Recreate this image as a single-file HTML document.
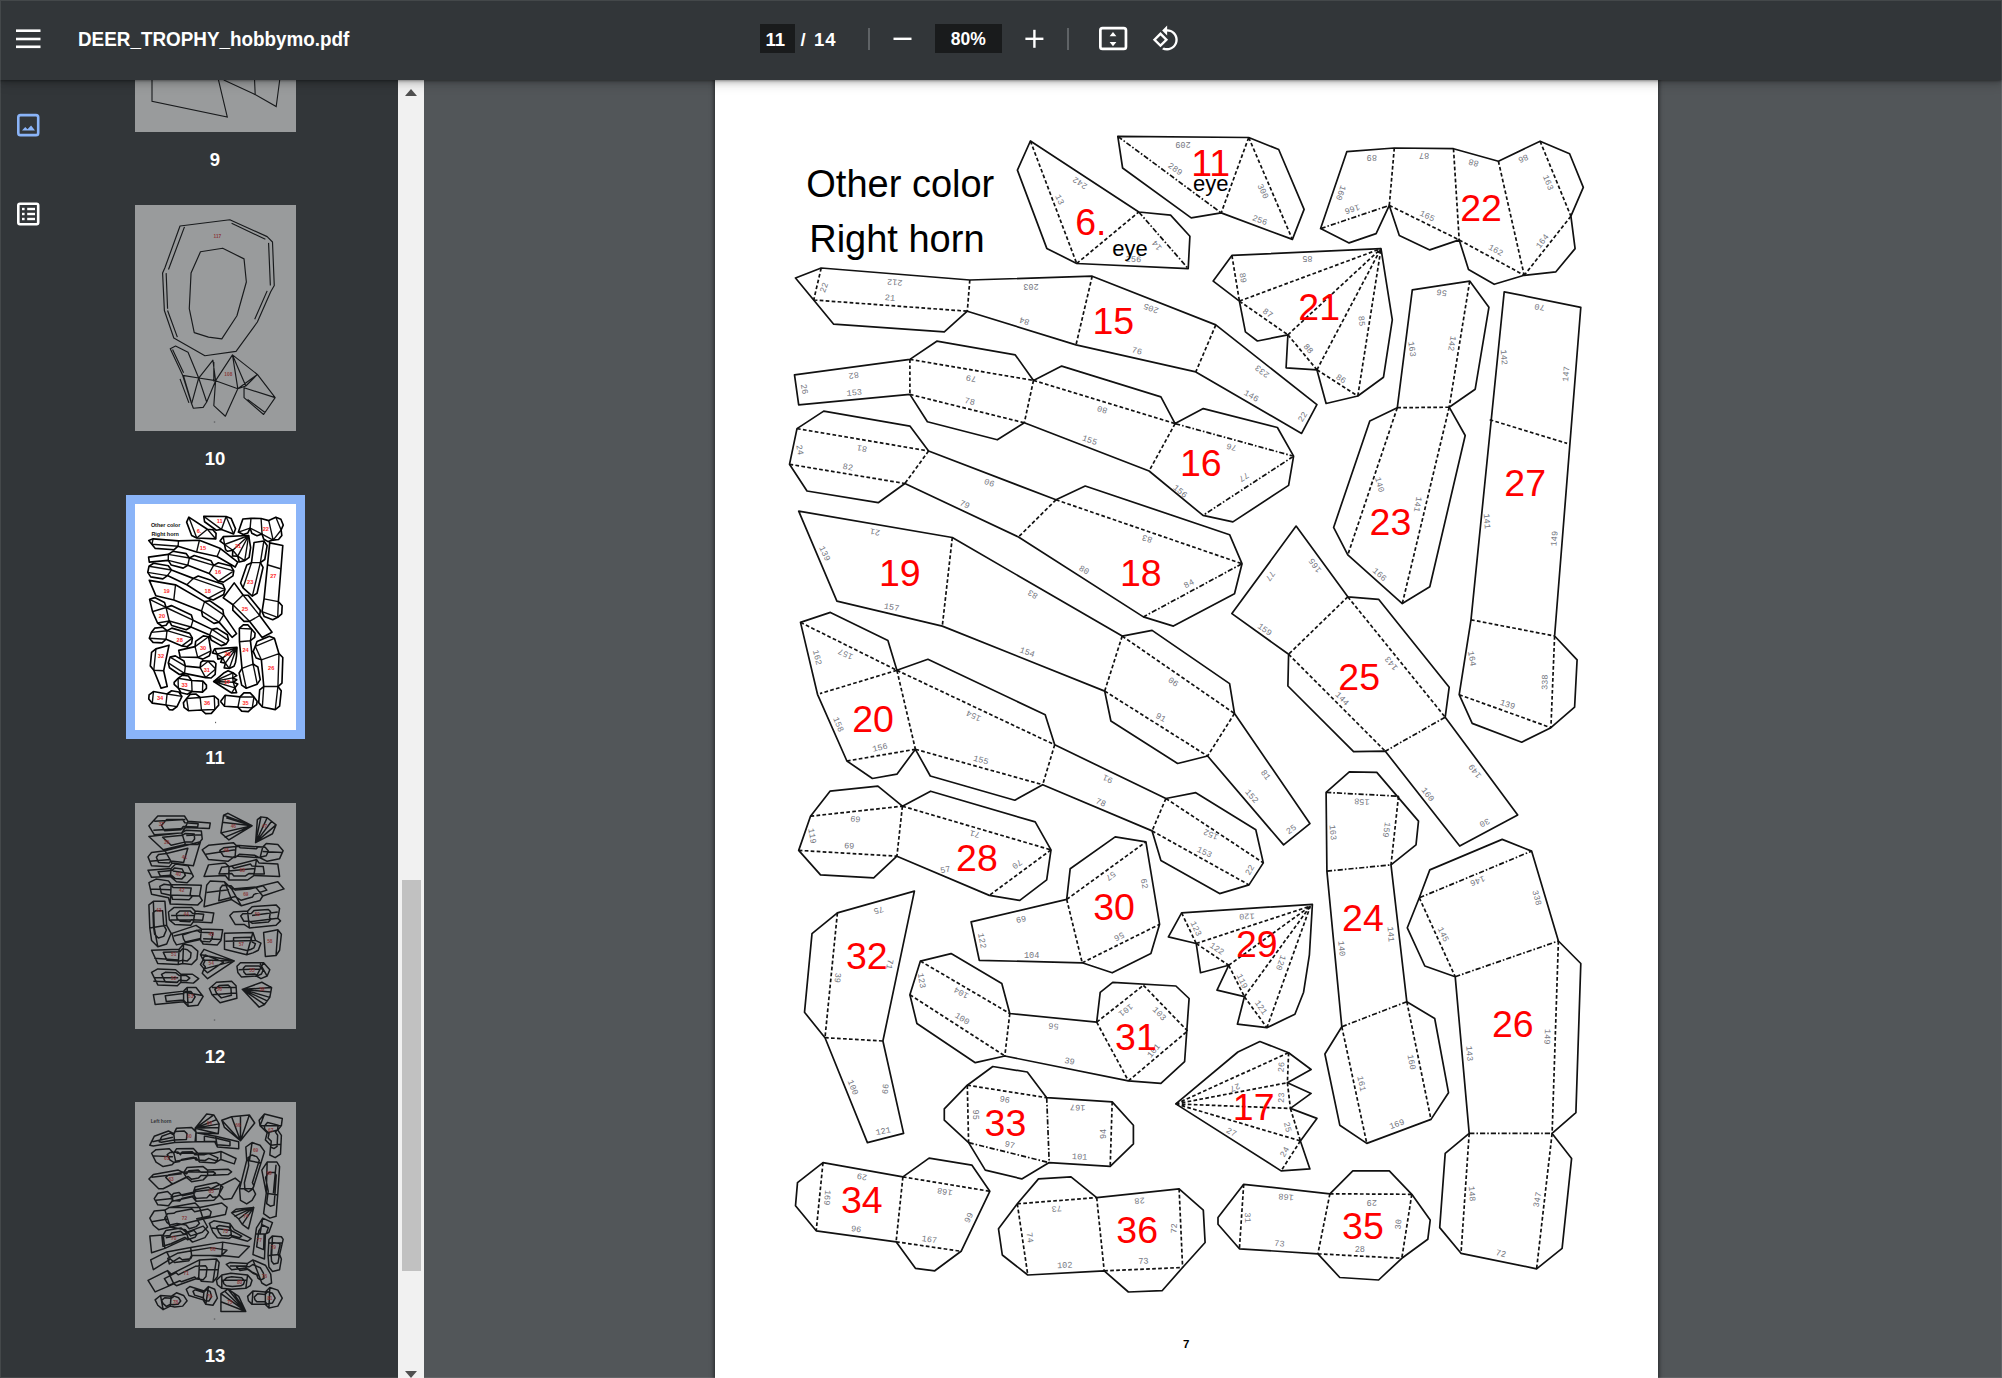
<!DOCTYPE html>
<html lang="en"><head><meta charset="utf-8"><title>DEER_TROPHY_hobbymo.pdf</title>
<style>
html,body{margin:0;padding:0;}
body{width:2002px;height:1378px;overflow:hidden;background:#525659;position:relative;font-family:"Liberation Sans",sans-serif;}
#main{position:absolute;left:424px;top:80px;width:1578px;height:1298px;background:#525659;}
#page{position:absolute;left:714.7px;top:64px;width:943.6px;height:1324px;background:#fff;box-shadow:0 0 4px 1px rgba(0,0,0,.55);}
#draw{position:absolute;left:0;top:0;}
#side{position:absolute;left:0;top:80px;width:398px;height:1298px;background:#323639;overflow:hidden;}
#sbar{position:absolute;left:398px;top:80px;width:26px;height:1298px;background:#f1f1f1;}
#sthumb{position:absolute;left:3.5px;top:800px;width:19px;height:391px;background:#c1c1c1;}
.arr{position:absolute;left:7px;width:0;height:0;border-left:6px solid transparent;border-right:6px solid transparent;}
#tbar{position:absolute;left:0;top:0;width:2002px;height:80px;background:#323639;box-shadow:0 -2px 8px rgba(0,0,0,.09),0 5px 10px rgba(0,0,0,.12),0 1px 2px rgba(0,0,0,.3),0 2px 6px rgba(0,0,0,.15);color:#fff;}
#title{position:absolute;left:78.4px;top:24.5px;font-size:20.5px;font-weight:bold;line-height:28px;white-space:nowrap;transform:scaleX(.92);transform-origin:0 0;}
.box{position:absolute;top:24px;height:29px;background:#191b1c;}
.tt{position:absolute;top:24.7px;line-height:29px;font-size:18.5px;font-weight:bold;white-space:nowrap;}
.dv{position:absolute;top:28px;width:1.5px;height:22px;background:#5f6366;}
#edge{position:absolute;left:0;top:0;width:2002px;height:1378px;box-shadow:inset 0 0 0 1px rgba(255,255,255,.09);pointer-events:none;}
.thumb{position:absolute;left:135px;width:161px;height:226px;background:#fff;opacity:.5;overflow:hidden;}
.tl{position:absolute;left:115px;width:200px;text-align:center;color:#fff;font-size:18.5px;font-weight:bold;line-height:22px;margin-top:1.3px;}
.red text{fill:#ff0000;font-size:37.5px;text-anchor:middle;font-family:"Liberation Sans",sans-serif;}
.blk text{fill:#000;font-family:"Liberation Sans",sans-serif;}
</style></head><body>
<div id="main"></div>
<div id="page"></div>
<svg id="draw" width="2002" height="1378" viewBox="0 0 2002 1378">
<g fill="none" stroke="#111" stroke-width="1.7" stroke-linejoin="round">
<path d="M1030.4,141 L1017.4,170.1 L1046.8,248.4 L1076.7,263.5 L1188.2,268.6 L1189.9,236.2 L1170.6,215.1 L1138.8,212Z M1117.8,136.4 L1248.7,137.5 L1278.7,149.5 L1304.1,209.4 L1292.4,239.4 L1221.2,212.9 L1191.2,217.9 L1122.6,168Z M1320.6,228.6 L1346.8,151.7 L1394.3,148 L1453.5,148.7 L1498.4,161.2 L1540.1,141.2 L1569.6,153.7 L1583.3,187.4 L1570.9,216.2 L1575.1,248.6 L1555.9,271.8 L1524.2,275.3 L1494.2,284.3 L1468.5,269.4 L1459.2,239.9 L1429.8,249.9 L1399.3,235.4 L1389.3,205.4 L1376.1,233.6 L1349.1,242.9Z M1213.2,281.1 L1231.9,255.4 L1381,248.6 L1392.3,319.8 L1383.5,377.2 L1357.8,396 L1326.1,403.5 L1316.9,369.8 L1286.1,367.8 L1287.9,334.8 L1257.4,341 L1245.4,331.8 L1239.4,301.1Z M1412.3,289.8 L1469.7,281.1 L1488.9,307.3 L1475.2,389.2 L1449.2,407.2 L1465.2,435.5 L1429.8,586.8 L1402.3,603.6 L1347.8,554.9 L1333.6,527.4 L1369.8,420.9 L1397.3,407.7Z M1504.2,291.8 L1580.8,307.3 L1554.6,636 L1577.1,659.8 L1574.6,707.2 L1550.9,727.7 L1521.7,742.2 L1472.2,723.4 L1459.2,694.7 L1471,619.8Z M795.5,278 L821.2,268 L969.8,280 L1092.2,276.2 L1215.8,324.9 L1316.9,404.7 L1301.6,433.4 L1195.8,371.9 L1076,344.9 L967.3,311.2 L944.3,331.9 L833.7,324.2Z M794.5,374.9 L909.9,359.4 L936.8,341.2 L1015.3,354.9 L1033.5,380.4 L1061.7,366.1 L1160.9,396.9 L1175.1,423.6 L1203.3,408.6 L1277.4,427.5 L1293.6,456.2 L1288.6,485.4 L1232.9,521.9 L1203,515.4 L1149.1,471 L1024.3,422.8 L997.3,439.8 L927.4,421.8 L909.9,394.4 L798.7,404.8Z M789.5,464.3 L797,428.6 L823.7,411.1 L909.9,426.1 L928.6,451 L1056,499.8 L1085.2,486 L1229.6,534.7 L1242,563.7 L1234.5,593.7 L1173.4,626.1 L1143.4,616.9 L1018.5,537 L904.9,483.5 L878.2,502.7 L807,491Z M798.7,511.2 L952.3,537.5 L1122.2,636.1 L1152.1,630.4 L1229.6,683.6 L1234.5,713.5 L1309.9,823.6 L1283.6,844.9 L1207.6,756 L1177.6,763.5 L1110.9,721 L1104.7,691.1 L942.3,626.1 L836.9,601.1Z M800.5,622.4 L830.4,612.4 L887.9,640.4 L896.9,670.3 L927.9,659.3 L1045.2,714.8 L1054.7,744.8 L1165.9,798.5 L1195.8,792.7 L1255.8,829.7 L1263.3,862.9 L1249,884.9 L1219.6,893.6 L1160.9,860.4 L1152.1,830.9 L1042.7,784.7 L1014.8,800.2 L930.3,776 L915.4,749.3 L896.9,774.2 L872.4,778.5 L846.9,761 L817.5,694.3Z M1296.1,526.1 L1347.8,596.8 L1378.6,599.3 L1449.2,687.2 L1445.2,717.2 L1517.7,814.9 L1459.7,846.1 L1385.3,751.2 L1353.6,751.7 L1287.9,686 L1288.6,654.3 L1231.9,613.6Z M1326.1,792.4 L1349.3,771.9 L1376.8,772.4 L1418.5,821.1 L1416,844.9 L1391,864.9 L1406.8,1001.7 L1434.7,1018.5 L1448.5,1092.7 L1431,1119.4 L1366.8,1143.4 L1339.8,1125.2 L1324.9,1054 L1341.8,1026.7 L1326.9,871.1Z M1429.8,869.9 L1502.2,839.4 L1531.6,851.1 L1558.4,941 L1580.8,963.5 L1575.9,1112.7 L1552.1,1133.4 L1571.6,1158.4 L1562.1,1248.3 L1536.6,1268.8 L1461,1253.3 L1439.7,1227.6 L1445.2,1153.4 L1469.2,1133.4 L1455.2,976.7 L1424.8,966 L1407.3,927.8 L1419.3,897.8Z M1181.6,912.9 L1312.4,904.3 L1309.4,954.8 L1303.6,992.2 L1294.9,1014.2 L1266.9,1027.7 L1237.4,1024.2 L1244.4,996.7 L1217,990.2 L1228.7,965.3 L1200.5,972.7 L1196.2,943.5 L1168.4,936.8Z M798.7,850.4 L810.5,816.2 L830,791.2 L877.9,786.2 L902.4,806.2 L930.6,791.2 L1035.2,821.9 L1051,849.9 L1046.7,879.9 L1019.8,900.4 L989.3,895.4 L896.9,856.2 L873.7,877.9 L820.5,874.9Z M971.1,921.8 L1066.7,899.4 L1070.2,868.7 L1115.2,836.9 L1145.9,841.9 L1159.6,924.3 L1150.9,953.6 L1112.2,972.8 L1082.2,962.8 L979.3,960.3Z M837.4,912.9 L914.4,891.1 L882.9,1041 L903.6,1133.4 L867.4,1142.6 L825,1037.7 L804.5,1012.3 L812,933.6Z M909.9,994.8 L920.4,961.1 L951.1,953.6 L1001.8,983.5 L1009.8,1013.5 L1096.7,1022.2 L1100.2,992.3 L1112.7,982.3 L1175.9,986 L1189.1,998.5 L1184.6,1061.7 L1160.9,1083.4 L1128.4,1080.9 L1004.8,1056 L975.3,1062.7 L916.9,1023.5Z M944.3,1108.9 L967.3,1085.2 L992.8,1066.5 L1027.3,1072 L1046.7,1097.7 L1112.2,1101.9 L1133.4,1125.2 L1133.4,1143.9 L1110.2,1166.4 L1049.2,1162.6 L1021.8,1178.9 L985.3,1170.1 L968.6,1142.6 L944.3,1120.2Z M795.5,1205.8 L797.5,1182.6 L823,1162.6 L902.9,1176.9 L929.1,1158.1 L971.8,1165.1 L989.8,1191.3 L961.1,1251.3 L934.8,1270.8 L915.4,1268.3 L896.1,1241.8 L816.2,1230.8Z M998.5,1228.8 L1017.3,1203.8 L1038.5,1178.9 L1071,1176.9 L1096.7,1197.6 L1179.1,1188.8 L1203.3,1210.1 L1205.1,1242.5 L1182.6,1267.5 L1162.1,1290.7 L1128.4,1292 L1104.2,1270.8 L1027.8,1275 L1002.3,1255Z M1175.8,1103.9 L1237.9,1052 L1259.9,1041.5 L1288.6,1052.7 L1311.1,1069.5 L1287.4,1082.7 L1311.1,1093.4 L1290.4,1108.4 L1316.9,1118.4 L1300.4,1140.9 L1309.9,1168.9 L1281.1,1170.9Z M1218,1217.6 L1243.7,1184.3 L1329.9,1193.8 L1352.8,1170.9 L1389.3,1170.9 L1411.8,1194.3 L1430.2,1220.1 L1427.8,1239.3 L1401.8,1258.3 L1378.6,1280 L1339.8,1277.5 L1317.9,1253.8 L1239.4,1248.8 L1218,1224.3Z"/>
<path stroke-dasharray="3.7 2.3" d="M1030.4,141 L1076.7,263.5 M1076.7,263.5 L1138.8,212 M1248.7,137.5 L1221.2,212.9 M1248.7,137.5 L1292.4,239.4 M1394.3,148 L1389.3,205.4 M1389.3,205.4 L1459.2,239.9 M1453.5,148.7 L1459.2,239.9 M1459.2,239.9 L1524.2,275.3 M1498.4,161.2 L1524.2,275.3 M1540.1,141.2 L1570.9,216.2 M1570.9,216.2 L1524.2,275.3 M1231.9,255.4 L1239.4,301.1 M1239.4,301.1 L1381,248.6 M1239.4,301.1 L1287.9,334.8 M1287.9,334.8 L1381,248.6 M1287.9,334.8 L1316.9,369.8 M1316.9,369.8 L1381,248.6 M1316.9,369.8 L1357.8,396 M1357.8,396 L1381,248.6 M1469.7,281.1 L1449.2,407.2 M1397.3,407.7 L1449.2,407.2 M1397.3,407.7 L1347.8,554.9 M1449.2,407.2 L1402.3,603.6 M1489.7,419.7 L1567.1,443.4 M1471,619.8 L1554.6,636 M1554.6,636 L1550.9,727.7 M1459.2,694.7 L1550.9,727.7 M821.2,268 L813.7,300 M813.7,300 L967.3,311.2 M969.8,280 L967.3,311.2 M1092.2,276.2 L1076,344.9 M1215.8,324.9 L1195.8,371.9 M909.9,359.4 L909.9,394.4 M909.9,359.4 L1033.5,380.4 M909.9,394.4 L1024.3,422.8 M1033.5,380.4 L1024.3,422.8 M1033.5,380.4 L1175.1,423.6 M1175.1,423.6 L1149.1,471 M797,428.6 L928.6,451 M789.5,464.3 L904.9,483.5 M928.6,451 L904.9,483.5 M1056,499.8 L1018.5,537 M1056,499.8 L1242,563.7 M952.3,537.5 L942.3,626.1 M1122.2,636.1 L1104.7,691.1 M1122.2,636.1 L1234.5,713.5 M1104.7,691.1 L1207.6,756 M1234.5,713.5 L1207.6,756 M800.5,622.4 L896.9,670.3 M896.9,670.3 L820,693.6 M896.9,670.3 L915.4,749.3 M846.9,761 L915.4,749.3 M896.9,670.3 L1054.7,744.8 M915.4,749.3 L1042.7,784.7 M1054.7,744.8 L1042.7,784.7 M1165.9,798.5 L1152.1,830.9 M1165.9,798.5 L1263.3,862.9 M1152.1,830.9 L1249,884.9 M1347.8,596.8 L1288.6,654.3 M1347.8,596.8 L1445.2,717.2 M1288.6,654.3 L1385.3,751.2 M1398.5,796.2 L1391,864.9 M1341.8,1026.7 L1366.8,1143.4 M1406.8,1001.7 L1431,1119.4 M1419.3,897.8 L1455.2,976.7 M1558.4,941 L1552.1,1133.4 M1469.2,1133.4 L1461,1253.3 M1552.1,1133.4 L1536.6,1268.8 M1181.6,912.9 L1196.2,943.5 M1196.2,943.5 L1310.4,906.1 M1196.2,943.5 L1228.7,965.3 M1228.7,965.3 L1310.4,906.1 M1228.7,965.3 L1244.4,996.7 M1244.4,996.7 L1310.4,906.1 M1244.4,996.7 L1266.9,1027.7 M1266.9,1027.7 L1310.4,906.1 M810.5,816.2 L902.4,806.2 M902.4,806.2 L896.9,856.2 M798.7,850.4 L896.9,856.2 M902.4,806.2 L1051,849.9 M1051,849.9 L989.3,895.4 M1066.7,899.4 L1145.9,841.9 M1066.7,899.4 L1082.2,962.8 M1082.2,962.8 L1159.6,924.3 M837.4,912.9 L825,1037.7 M825,1037.7 L882.9,1041 M920.4,961.1 L1009.8,1013.5 M909.9,994.8 L1004.8,1056 M1009.8,1013.5 L1004.8,1056 M1096.7,1022.2 L1143.4,985.3 M1143.4,985.3 L1187.6,1031 M1096.7,1022.2 L1128.4,1080.9 M1128.4,1080.9 L1187.6,1031 M967.3,1085.2 L1046.7,1097.7 M967.3,1085.2 L968.6,1142.6 M1112.2,1101.9 L1110.2,1166.4 M823,1162.6 L816.2,1230.8 M902.9,1176.9 L896.1,1241.8 M902.9,1176.9 L989.8,1191.3 M896.1,1241.8 L961.1,1251.3 M1017.3,1203.8 L1096.7,1197.6 M1017.3,1203.8 L1027.8,1275 M1096.7,1197.6 L1104.2,1270.8 M1179.1,1188.8 L1182.6,1267.5 M1104.2,1270.8 L1182.6,1267.5 M1175.8,1103.9 L1288.6,1052.7 M1175.8,1103.9 L1287.4,1082.7 M1175.8,1103.9 L1290.4,1108.4 M1175.8,1103.9 L1300.4,1140.9 M1288.6,1052.7 L1287.4,1082.7 M1287.4,1082.7 L1290.4,1108.4 M1290.4,1108.4 L1300.4,1140.9 M1300.4,1140.9 L1281.1,1170.9 M1243.7,1184.3 L1239.4,1248.8 M1329.9,1193.8 L1317.9,1253.8 M1329.9,1193.8 L1411.8,1194.3 M1411.8,1194.3 L1401.8,1258.3 M1317.9,1253.8 L1401.8,1258.3"/>
<path stroke-dasharray="5.2 2 1.6 2" d="M1138.8,212 L1188.2,268.6 M1117.8,136.4 L1221.2,212.9 M1320.6,228.6 L1389.3,205.4 M1175.1,423.6 L1293.6,456.2 M1293.6,456.2 L1203,515.4 M1242,563.7 L1143.4,616.9 M1445.2,717.2 L1385.3,751.2 M1326.1,792.4 L1398.5,796.2 M1326.9,871.1 L1391,864.9 M1341.8,1026.7 L1406.8,1001.7 M1419.3,897.8 L1531.6,851.1 M1455.2,976.7 L1558.4,941 M1469.2,1133.4 L1552.1,1133.4 M1046.7,1097.7 L1049.2,1162.6 M968.6,1142.6 L1049.2,1162.6"/>
</g>
<g font-family="Liberation Mono,monospace" font-size="8.6" fill="#75777f" text-anchor="middle">
<text transform="translate(1079.9 183.1) rotate(213)" y="2.9">242</text>
<text transform="translate(1059.9 199.5) rotate(65)" y="2.9">13</text>
<text transform="translate(1156.7 245.6) rotate(230)" y="2.9">14</text>
<text transform="translate(1133.5 258.9) rotate(3)" y="2.9">256</text>
<text transform="translate(1183 145.3) rotate(180)" y="2.9">209</text>
<text transform="translate(1175.2 168.8) rotate(35)" y="2.9">289</text>
<text transform="translate(1263.2 191.2) rotate(65)" y="2.9">300</text>
<text transform="translate(1259.9 219.9) rotate(20)" y="2.9">256</text>
<text transform="translate(1371.8 157.5) rotate(180)" y="2.9">89</text>
<text transform="translate(1424 155.7) rotate(180)" y="2.9">87</text>
<text transform="translate(1473.5 163) rotate(195)" y="2.9">88</text>
<text transform="translate(1523.4 158.7) rotate(155)" y="2.9">86</text>
<text transform="translate(1548.4 182.4) rotate(68)" y="2.9">163</text>
<text transform="translate(1341.1 192.9) rotate(110)" y="2.9">160</text>
<text transform="translate(1352.3 209.4) rotate(162)" y="2.9">166</text>
<text transform="translate(1427.3 215.7) rotate(25)" y="2.9">165</text>
<text transform="translate(1495.9 249.9) rotate(28)" y="2.9">162</text>
<text transform="translate(1542.1 241.1) rotate(-52)" y="2.9">164</text>
<text transform="translate(1307.4 259.4) rotate(180)" y="2.9">85</text>
<text transform="translate(1243.2 277.8) rotate(80)" y="2.9">89</text>
<text transform="translate(1267.9 312.8) rotate(35)" y="2.9">87</text>
<text transform="translate(1361.8 321) rotate(85)" y="2.9">85</text>
<text transform="translate(1308.6 348.5) rotate(50)" y="2.9">88</text>
<text transform="translate(1341.1 378.5) rotate(33)" y="2.9">86</text>
<text transform="translate(1441.7 292.8) rotate(188)" y="2.9">56</text>
<text transform="translate(1452.2 343.5) rotate(100)" y="2.9">142</text>
<text transform="translate(1412.3 349) rotate(82)" y="2.9">163</text>
<text transform="translate(1539.6 307.3) rotate(190)" y="2.9">70</text>
<text transform="translate(1504.2 357.3) rotate(85)" y="2.9">142</text>
<text transform="translate(1565.9 374) rotate(-85)" y="2.9">147</text>
<text transform="translate(1302.4 416.7) rotate(-60)" y="2.9">22</text>
<text transform="translate(823.7 287.5) rotate(-70)" y="2.9">22</text>
<text transform="translate(894.9 282.5) rotate(185)" y="2.9">212</text>
<text transform="translate(889.9 297.5) rotate(5)" y="2.9">21</text>
<text transform="translate(1031 287) rotate(180)" y="2.9">203</text>
<text transform="translate(1024.3 321.2) rotate(197)" y="2.9">84</text>
<text transform="translate(1150.9 308.7) rotate(200)" y="2.9">205</text>
<text transform="translate(1137.1 350.6) rotate(15)" y="2.9">76</text>
<text transform="translate(1262 371.6) rotate(218)" y="2.9">233</text>
<text transform="translate(1251.5 395.6) rotate(30)" y="2.9">146</text>
<text transform="translate(853.7 375.6) rotate(172)" y="2.9">82</text>
<text transform="translate(804.5 389.1) rotate(80)" y="2.9">26</text>
<text transform="translate(854.2 392.4) rotate(-5)" y="2.9">153</text>
<text transform="translate(971.1 378.6) rotate(190)" y="2.9">79</text>
<text transform="translate(969.8 401.1) rotate(13)" y="2.9">78</text>
<text transform="translate(1102.2 409.8) rotate(197)" y="2.9">80</text>
<text transform="translate(1089.7 439.8) rotate(20)" y="2.9">155</text>
<text transform="translate(1231.5 447.3) rotate(195)" y="2.9">76</text>
<text transform="translate(1244 477.3) rotate(148)" y="2.9">77</text>
<text transform="translate(1180.3 491) rotate(40)" y="2.9">156</text>
<text transform="translate(800 449.8) rotate(80)" y="2.9">24</text>
<text transform="translate(861.9 448.6) rotate(190)" y="2.9">81</text>
<text transform="translate(847.9 466.8) rotate(10)" y="2.9">82</text>
<text transform="translate(989.3 482.8) rotate(200)" y="2.9">90</text>
<text transform="translate(964.8 504.2) rotate(25)" y="2.9">79</text>
<text transform="translate(874.9 532.2) rotate(190)" y="2.9">21</text>
<text transform="translate(825 553.4) rotate(65)" y="2.9">139</text>
<text transform="translate(1147.1 539) rotate(198)" y="2.9">83</text>
<text transform="translate(1084.2 569.7) rotate(30)" y="2.9">80</text>
<text transform="translate(1188.8 583.4) rotate(-28)" y="2.9">84</text>
<text transform="translate(1032.7 594.4) rotate(210)" y="2.9">83</text>
<text transform="translate(891.6 606.9) rotate(10)" y="2.9">157</text>
<text transform="translate(1027.3 651.8) rotate(20)" y="2.9">154</text>
<text transform="translate(817.5 657.3) rotate(75)" y="2.9">162</text>
<text transform="translate(845.4 654.3) rotate(205)" y="2.9">157</text>
<text transform="translate(838.7 724.3) rotate(68)" y="2.9">158</text>
<text transform="translate(879.9 747.3) rotate(-12)" y="2.9">156</text>
<text transform="translate(973.6 716) rotate(205)" y="2.9">154</text>
<text transform="translate(981 759.7) rotate(15)" y="2.9">155</text>
<text transform="translate(1173.4 681.8) rotate(215)" y="2.9">90</text>
<text transform="translate(1160.9 717.3) rotate(30)" y="2.9">91</text>
<text transform="translate(1107.7 779.2) rotate(205)" y="2.9">91</text>
<text transform="translate(1100.9 802.2) rotate(25)" y="2.9">78</text>
<text transform="translate(1265.8 774.7) rotate(55)" y="2.9">81</text>
<text transform="translate(1252 796) rotate(50)" y="2.9">152</text>
<text transform="translate(1210.8 834.7) rotate(205)" y="2.9">152</text>
<text transform="translate(855.4 819.2) rotate(185)" y="2.9">69</text>
<text transform="translate(812.5 835.9) rotate(80)" y="2.9">119</text>
<text transform="translate(974.8 834.2) rotate(195)" y="2.9">71</text>
<text transform="translate(1379.8 484.4) rotate(75)" y="2.9">140</text>
<text transform="translate(1418 504.4) rotate(100)" y="2.9">141</text>
<text transform="translate(1379.8 574.3) rotate(42)" y="2.9">166</text>
<text transform="translate(1487.2 521.1) rotate(85)" y="2.9">141</text>
<text transform="translate(1554.1 538.6) rotate(-85)" y="2.9">149</text>
<text transform="translate(1472.2 658.5) rotate(80)" y="2.9">164</text>
<text transform="translate(1544.6 682.2) rotate(-88)" y="2.9">338</text>
<text transform="translate(1507.7 704.2) rotate(18)" y="2.9">139</text>
<text transform="translate(1314.9 565.6) rotate(234)" y="2.9">165</text>
<text transform="translate(1270.4 576.1) rotate(125)" y="2.9">77</text>
<text transform="translate(1264.9 629.3) rotate(35)" y="2.9">159</text>
<text transform="translate(1391 663.5) rotate(231)" y="2.9">143</text>
<text transform="translate(1342.3 698.5) rotate(45)" y="2.9">144</text>
<text transform="translate(1291.1 829.1) rotate(-35)" y="2.9">25</text>
<text transform="translate(1361.8 801.9) rotate(183)" y="2.9">158</text>
<text transform="translate(1333.1 832.4) rotate(85)" y="2.9">163</text>
<text transform="translate(1386.8 829.9) rotate(98)" y="2.9">159</text>
<text transform="translate(1428 794.2) rotate(52)" y="2.9">160</text>
<text transform="translate(1474.7 771.2) rotate(233)" y="2.9">149</text>
<text transform="translate(1484.7 822.9) rotate(152)" y="2.9">30</text>
<text transform="translate(1477.7 881.1) rotate(158)" y="2.9">146</text>
<text transform="translate(1537.1 897.8) rotate(75)" y="2.9">338</text>
<text transform="translate(1443.5 934.3) rotate(65)" y="2.9">145</text>
<text transform="translate(1391 934.3) rotate(85)" y="2.9">141</text>
<text transform="translate(1341.8 948.5) rotate(85)" y="2.9">140</text>
<text transform="translate(1547.6 1036.7) rotate(92)" y="2.9">149</text>
<text transform="translate(1469.7 1053.4) rotate(85)" y="2.9">143</text>
<text transform="translate(1196.2 928.5) rotate(65)" y="2.9">123</text>
<text transform="translate(1246.9 916.6) rotate(178)" y="2.9">120</text>
<text transform="translate(1217 948.5) rotate(35)" y="2.9">122</text>
<text transform="translate(1281.1 962.8) rotate(110)" y="2.9">120</text>
<text transform="translate(1242.4 981) rotate(65)" y="2.9">119</text>
<text transform="translate(1261.2 1007.2) rotate(55)" y="2.9">121</text>
<text transform="translate(849.2 845.7) rotate(3)" y="2.9">69</text>
<text transform="translate(945.3 869.4) rotate(-10)" y="2.9">57</text>
<text transform="translate(1017.3 864.4) rotate(144)" y="2.9">70</text>
<text transform="translate(1204.6 851.9) rotate(25)" y="2.9">153</text>
<text transform="translate(1249.5 869.9) rotate(-60)" y="2.9">22</text>
<text transform="translate(878.7 910.4) rotate(164)" y="2.9">75</text>
<text transform="translate(1021 919.4) rotate(168)" y="2.9">69</text>
<text transform="translate(1110.9 876.1) rotate(144)" y="2.9">57</text>
<text transform="translate(1144.6 883.6) rotate(80)" y="2.9">62</text>
<text transform="translate(1119.2 936.8) rotate(152)" y="2.9">56</text>
<text transform="translate(982.3 940.6) rotate(80)" y="2.9">122</text>
<text transform="translate(1031.7 954.8) rotate(0)" y="2.9">104</text>
<text transform="translate(889.9 964.3) rotate(100)" y="2.9">71</text>
<text transform="translate(837.9 977.8) rotate(95)" y="2.9">39</text>
<text transform="translate(921.9 980.5) rotate(80)" y="2.9">123</text>
<text transform="translate(961.1 993) rotate(210)" y="2.9">104</text>
<text transform="translate(962.3 1018.5) rotate(33)" y="2.9">100</text>
<text transform="translate(1053.5 1026.5) rotate(185)" y="2.9">56</text>
<text transform="translate(1125.9 1010.3) rotate(142)" y="2.9">101</text>
<text transform="translate(1159.6 1013.5) rotate(45)" y="2.9">103</text>
<text transform="translate(1153.4 1050.5) rotate(-50)" y="2.9">101</text>
<text transform="translate(1069.7 1061) rotate(12)" y="2.9">39</text>
<text transform="translate(853.2 1087.2) rotate(68)" y="2.9">100</text>
<text transform="translate(885.4 1088.9) rotate(95)" y="2.9">99</text>
<text transform="translate(883.1 1130.9) rotate(-12)" y="2.9">121</text>
<text transform="translate(1004.8 1099.4) rotate(10)" y="2.9">96</text>
<text transform="translate(1077.7 1107.7) rotate(183)" y="2.9">167</text>
<text transform="translate(976.1 1114.7) rotate(90)" y="2.9">95</text>
<text transform="translate(1009.8 1144.6) rotate(12)" y="2.9">97</text>
<text transform="translate(1102.9 1133.9) rotate(-90)" y="2.9">94</text>
<text transform="translate(1079.7 1156.4) rotate(3)" y="2.9">101</text>
<text transform="translate(861.9 1176.9) rotate(190)" y="2.9">29</text>
<text transform="translate(944.8 1191.8) rotate(190)" y="2.9">168</text>
<text transform="translate(827.5 1197.6) rotate(95)" y="2.9">169</text>
<text transform="translate(856.2 1228.8) rotate(8)" y="2.9">96</text>
<text transform="translate(968.6 1217.6) rotate(-65)" y="2.9">99</text>
<text transform="translate(929.4 1239.3) rotate(8)" y="2.9">167</text>
<text transform="translate(1139.6 1200.8) rotate(175)" y="2.9">28</text>
<text transform="translate(1056.7 1208.8) rotate(175)" y="2.9">73</text>
<text transform="translate(1030.2 1237.5) rotate(82)" y="2.9">74</text>
<text transform="translate(1173.9 1228.3) rotate(-88)" y="2.9">72</text>
<text transform="translate(1064.7 1265) rotate(-3)" y="2.9">102</text>
<text transform="translate(1143.4 1260.8) rotate(-3)" y="2.9">73</text>
<text transform="translate(1235 1087.7) rotate(158)" y="2.9">27</text>
<text transform="translate(1231.5 1131.9) rotate(28)" y="2.9">27</text>
<text transform="translate(1281.1 1067) rotate(-85)" y="2.9">26</text>
<text transform="translate(1281.1 1097.7) rotate(-88)" y="2.9">23</text>
<text transform="translate(1287.9 1126.9) rotate(75)" y="2.9">25</text>
<text transform="translate(1284.4 1151.9) rotate(-60)" y="2.9">24</text>
<text transform="translate(1361.8 1083.5) rotate(78)" y="2.9">161</text>
<text transform="translate(1411.8 1062) rotate(80)" y="2.9">160</text>
<text transform="translate(1396.8 1123.9) rotate(-20)" y="2.9">169</text>
<text transform="translate(1472.2 1193.8) rotate(85)" y="2.9">148</text>
<text transform="translate(1537.1 1199.6) rotate(-80)" y="2.9">347</text>
<text transform="translate(1500.9 1253.3) rotate(15)" y="2.9">72</text>
<text transform="translate(1286.1 1197.1) rotate(185)" y="2.9">168</text>
<text transform="translate(1371.8 1202.6) rotate(180)" y="2.9">29</text>
<text transform="translate(1247.9 1217.6) rotate(88)" y="2.9">31</text>
<text transform="translate(1398 1224.3) rotate(-85)" y="2.9">30</text>
<text transform="translate(1279.4 1243.3) rotate(5)" y="2.9">73</text>
<text transform="translate(1359.8 1248.8) rotate(0)" y="2.9">28</text>
</g>
<g class="blk">
<text x="806.3" y="197.3" font-size="38">Other color</text>
<text x="809.2" y="252.1" font-size="38">Right horn</text>
<text x="1112.2" y="255.5" font-size="22">eye</text>
<text x="1193" y="191.2" font-size="22">eye</text>
<text x="1183" y="1348.2" font-size="11.5" font-weight="bold">7</text>
</g>
<g class="red">
<text x="1090.9" y="234.7">6.</text>
<text x="1210.6" y="176.0">11</text>
<text x="1481.0" y="221.0">22</text>
<text x="1319.2" y="320.0">21</text>
<text x="1113.3" y="333.7">15</text>
<text x="1200.8" y="476.0">16</text>
<text x="1140.8" y="586.0">18</text>
<text x="899.8" y="586.0">19</text>
<text x="873.0" y="732.3">20</text>
<text x="1390.4" y="534.9">23</text>
<text x="1525.2" y="496.2">27</text>
<text x="1359.2" y="689.7">25</text>
<text x="1362.9" y="931.0">24</text>
<text x="1512.8" y="1037.2">26</text>
<text x="1256.8" y="957.3">29</text>
<text x="976.9" y="871.1">28</text>
<text x="1114.1" y="919.9">30</text>
<text x="866.8" y="968.6">32</text>
<text x="1135.9" y="1049.7">31</text>
<text x="1005.4" y="1136.4">33</text>
<text x="861.8" y="1212.6">34</text>
<text x="1137.2" y="1242.5">36</text>
<text x="1253.7" y="1120.2">17</text>
<text x="1362.9" y="1238.8">35</text>
</g>
</svg>
<div id="side">
<div class="thumb" style="top:-174px"><svg width="161" height="226" viewBox="0 0 161 226"><path d="M17,120 L17,195.4 L92.3,211.1 L83.5,174 L70,120 M88.8,174 L118.5,187.7 L141.2,200.6 L144.7,174 L150,120 M75,120 L88.8,174 M118.5,150 L120.2,188.4" fill="none" stroke="#000" stroke-width="1.1"/></svg></div>
<div class="tl" style="top:68px">9</div>
<div class="thumb" style="top:125px"><svg width="161" height="226" viewBox="57 57 905 1271"><path d="M310,175 L590,140 L800,235 L830,265 L840,510 L820,545 L745,715 L625,880 L450,905 L275,805 L222,650 L212,440 L225,410Z M425,320 L550,300 L670,360 L683,490 L630,680 L545,810 L470,800 L390,775 L362,640 L372,440Z M335,180 L245,420 M600,160 L790,250 M808,270 L818,510 M800,540 L730,700 M232,440 L240,640 M240,650 L295,800 M255,865 L285,850 L355,885 L415,1030 L325,1015Z M268,870 L330,1000 M325,1015 L415,1030 L510,1045 L635,1090 L680,1075 M415,1030 L495,930 L510,1045 L605,900 L635,1090 L745,1010 L605,900 M745,1010 L845,1140 L780,1235 L670,1140 L670,1085 L845,1140 M605,900 L680,1075 L745,1010 M690,1150 L790,1225 M325,1015 L375,1175 L415,1030 L460,1165 L510,1045 M375,1175 L385,1200 L440,1195 L460,1165 M310,1035 L360,1170 M330,1020 L372,1160 M500,940 L500,1050 M510,1045 L500,1185 L565,1245 L635,1090" fill="none" stroke="#000" stroke-width="6.6" stroke-linejoin="round"/><g fill="#e02020" font-size="27" font-weight="bold" fill-opacity=".85" text-anchor="middle" font-family="Liberation Sans,sans-serif"><text x="520" y="240">117</text><text x="582" y="1018">108</text></g><rect x="500" y="1275" width="8" height="5" fill="#555"/></svg></div>
<div class="tl" style="top:367px">10</div>
<div style="position:absolute;left:126px;top:415px;width:179px;height:244px;background:#8ab4f8;"></div>
<div class="thumb" style="top:424px;opacity:1"><svg width="161" height="226" viewBox="715 64 943 1324"><path d="M1030.4,141 L1017.4,170.1 L1046.8,248.4 L1076.7,263.5 L1188.2,268.6 L1189.9,236.2 L1170.6,215.1 L1138.8,212Z M1117.8,136.4 L1248.7,137.5 L1278.7,149.5 L1304.1,209.4 L1292.4,239.4 L1221.2,212.9 L1191.2,217.9 L1122.6,168Z M1320.6,228.6 L1346.8,151.7 L1394.3,148 L1453.5,148.7 L1498.4,161.2 L1540.1,141.2 L1569.6,153.7 L1583.3,187.4 L1570.9,216.2 L1575.1,248.6 L1555.9,271.8 L1524.2,275.3 L1494.2,284.3 L1468.5,269.4 L1459.2,239.9 L1429.8,249.9 L1399.3,235.4 L1389.3,205.4 L1376.1,233.6 L1349.1,242.9Z M1213.2,281.1 L1231.9,255.4 L1381,248.6 L1392.3,319.8 L1383.5,377.2 L1357.8,396 L1326.1,403.5 L1316.9,369.8 L1286.1,367.8 L1287.9,334.8 L1257.4,341 L1245.4,331.8 L1239.4,301.1Z M1412.3,289.8 L1469.7,281.1 L1488.9,307.3 L1475.2,389.2 L1449.2,407.2 L1465.2,435.5 L1429.8,586.8 L1402.3,603.6 L1347.8,554.9 L1333.6,527.4 L1369.8,420.9 L1397.3,407.7Z M1504.2,291.8 L1580.8,307.3 L1554.6,636 L1577.1,659.8 L1574.6,707.2 L1550.9,727.7 L1521.7,742.2 L1472.2,723.4 L1459.2,694.7 L1471,619.8Z M795.5,278 L821.2,268 L969.8,280 L1092.2,276.2 L1215.8,324.9 L1316.9,404.7 L1301.6,433.4 L1195.8,371.9 L1076,344.9 L967.3,311.2 L944.3,331.9 L833.7,324.2Z M794.5,374.9 L909.9,359.4 L936.8,341.2 L1015.3,354.9 L1033.5,380.4 L1061.7,366.1 L1160.9,396.9 L1175.1,423.6 L1203.3,408.6 L1277.4,427.5 L1293.6,456.2 L1288.6,485.4 L1232.9,521.9 L1203,515.4 L1149.1,471 L1024.3,422.8 L997.3,439.8 L927.4,421.8 L909.9,394.4 L798.7,404.8Z M789.5,464.3 L797,428.6 L823.7,411.1 L909.9,426.1 L928.6,451 L1056,499.8 L1085.2,486 L1229.6,534.7 L1242,563.7 L1234.5,593.7 L1173.4,626.1 L1143.4,616.9 L1018.5,537 L904.9,483.5 L878.2,502.7 L807,491Z M798.7,511.2 L952.3,537.5 L1122.2,636.1 L1152.1,630.4 L1229.6,683.6 L1234.5,713.5 L1309.9,823.6 L1283.6,844.9 L1207.6,756 L1177.6,763.5 L1110.9,721 L1104.7,691.1 L942.3,626.1 L836.9,601.1Z M800.5,622.4 L830.4,612.4 L887.9,640.4 L896.9,670.3 L927.9,659.3 L1045.2,714.8 L1054.7,744.8 L1165.9,798.5 L1195.8,792.7 L1255.8,829.7 L1263.3,862.9 L1249,884.9 L1219.6,893.6 L1160.9,860.4 L1152.1,830.9 L1042.7,784.7 L1014.8,800.2 L930.3,776 L915.4,749.3 L896.9,774.2 L872.4,778.5 L846.9,761 L817.5,694.3Z M1296.1,526.1 L1347.8,596.8 L1378.6,599.3 L1449.2,687.2 L1445.2,717.2 L1517.7,814.9 L1459.7,846.1 L1385.3,751.2 L1353.6,751.7 L1287.9,686 L1288.6,654.3 L1231.9,613.6Z M1326.1,792.4 L1349.3,771.9 L1376.8,772.4 L1418.5,821.1 L1416,844.9 L1391,864.9 L1406.8,1001.7 L1434.7,1018.5 L1448.5,1092.7 L1431,1119.4 L1366.8,1143.4 L1339.8,1125.2 L1324.9,1054 L1341.8,1026.7 L1326.9,871.1Z M1429.8,869.9 L1502.2,839.4 L1531.6,851.1 L1558.4,941 L1580.8,963.5 L1575.9,1112.7 L1552.1,1133.4 L1571.6,1158.4 L1562.1,1248.3 L1536.6,1268.8 L1461,1253.3 L1439.7,1227.6 L1445.2,1153.4 L1469.2,1133.4 L1455.2,976.7 L1424.8,966 L1407.3,927.8 L1419.3,897.8Z M1181.6,912.9 L1312.4,904.3 L1309.4,954.8 L1303.6,992.2 L1294.9,1014.2 L1266.9,1027.7 L1237.4,1024.2 L1244.4,996.7 L1217,990.2 L1228.7,965.3 L1200.5,972.7 L1196.2,943.5 L1168.4,936.8Z M798.7,850.4 L810.5,816.2 L830,791.2 L877.9,786.2 L902.4,806.2 L930.6,791.2 L1035.2,821.9 L1051,849.9 L1046.7,879.9 L1019.8,900.4 L989.3,895.4 L896.9,856.2 L873.7,877.9 L820.5,874.9Z M971.1,921.8 L1066.7,899.4 L1070.2,868.7 L1115.2,836.9 L1145.9,841.9 L1159.6,924.3 L1150.9,953.6 L1112.2,972.8 L1082.2,962.8 L979.3,960.3Z M837.4,912.9 L914.4,891.1 L882.9,1041 L903.6,1133.4 L867.4,1142.6 L825,1037.7 L804.5,1012.3 L812,933.6Z M909.9,994.8 L920.4,961.1 L951.1,953.6 L1001.8,983.5 L1009.8,1013.5 L1096.7,1022.2 L1100.2,992.3 L1112.7,982.3 L1175.9,986 L1189.1,998.5 L1184.6,1061.7 L1160.9,1083.4 L1128.4,1080.9 L1004.8,1056 L975.3,1062.7 L916.9,1023.5Z M944.3,1108.9 L967.3,1085.2 L992.8,1066.5 L1027.3,1072 L1046.7,1097.7 L1112.2,1101.9 L1133.4,1125.2 L1133.4,1143.9 L1110.2,1166.4 L1049.2,1162.6 L1021.8,1178.9 L985.3,1170.1 L968.6,1142.6 L944.3,1120.2Z M795.5,1205.8 L797.5,1182.6 L823,1162.6 L902.9,1176.9 L929.1,1158.1 L971.8,1165.1 L989.8,1191.3 L961.1,1251.3 L934.8,1270.8 L915.4,1268.3 L896.1,1241.8 L816.2,1230.8Z M998.5,1228.8 L1017.3,1203.8 L1038.5,1178.9 L1071,1176.9 L1096.7,1197.6 L1179.1,1188.8 L1203.3,1210.1 L1205.1,1242.5 L1182.6,1267.5 L1162.1,1290.7 L1128.4,1292 L1104.2,1270.8 L1027.8,1275 L1002.3,1255Z M1175.8,1103.9 L1237.9,1052 L1259.9,1041.5 L1288.6,1052.7 L1311.1,1069.5 L1287.4,1082.7 L1311.1,1093.4 L1290.4,1108.4 L1316.9,1118.4 L1300.4,1140.9 L1309.9,1168.9 L1281.1,1170.9Z M1218,1217.6 L1243.7,1184.3 L1329.9,1193.8 L1352.8,1170.9 L1389.3,1170.9 L1411.8,1194.3 L1430.2,1220.1 L1427.8,1239.3 L1401.8,1258.3 L1378.6,1280 L1339.8,1277.5 L1317.9,1253.8 L1239.4,1248.8 L1218,1224.3Z" fill="none" stroke="#000" stroke-width="9.6" stroke-linejoin="round"/><path d="M1030.4,141 L1076.7,263.5 M1076.7,263.5 L1138.8,212 M1138.8,212 L1188.2,268.6 M1117.8,136.4 L1221.2,212.9 M1248.7,137.5 L1221.2,212.9 M1248.7,137.5 L1292.4,239.4 M1394.3,148 L1389.3,205.4 M1320.6,228.6 L1389.3,205.4 M1389.3,205.4 L1459.2,239.9 M1453.5,148.7 L1459.2,239.9 M1459.2,239.9 L1524.2,275.3 M1498.4,161.2 L1524.2,275.3 M1540.1,141.2 L1570.9,216.2 M1570.9,216.2 L1524.2,275.3 M1231.9,255.4 L1239.4,301.1 M1239.4,301.1 L1381,248.6 M1239.4,301.1 L1287.9,334.8 M1287.9,334.8 L1381,248.6 M1287.9,334.8 L1316.9,369.8 M1316.9,369.8 L1381,248.6 M1316.9,369.8 L1357.8,396 M1357.8,396 L1381,248.6 M1469.7,281.1 L1449.2,407.2 M1397.3,407.7 L1449.2,407.2 M1397.3,407.7 L1347.8,554.9 M1449.2,407.2 L1402.3,603.6 M1489.7,419.7 L1567.1,443.4 M1471,619.8 L1554.6,636 M1554.6,636 L1550.9,727.7 M1459.2,694.7 L1550.9,727.7 M821.2,268 L813.7,300 M813.7,300 L967.3,311.2 M969.8,280 L967.3,311.2 M1092.2,276.2 L1076,344.9 M1215.8,324.9 L1195.8,371.9 M909.9,359.4 L909.9,394.4 M909.9,359.4 L1033.5,380.4 M909.9,394.4 L1024.3,422.8 M1033.5,380.4 L1024.3,422.8 M1033.5,380.4 L1175.1,423.6 M1175.1,423.6 L1149.1,471 M1175.1,423.6 L1293.6,456.2 M1293.6,456.2 L1203,515.4 M797,428.6 L928.6,451 M789.5,464.3 L904.9,483.5 M928.6,451 L904.9,483.5 M1056,499.8 L1018.5,537 M1056,499.8 L1242,563.7 M1242,563.7 L1143.4,616.9 M952.3,537.5 L942.3,626.1 M1122.2,636.1 L1104.7,691.1 M1122.2,636.1 L1234.5,713.5 M1104.7,691.1 L1207.6,756 M1234.5,713.5 L1207.6,756 M800.5,622.4 L896.9,670.3 M896.9,670.3 L820,693.6 M896.9,670.3 L915.4,749.3 M846.9,761 L915.4,749.3 M896.9,670.3 L1054.7,744.8 M915.4,749.3 L1042.7,784.7 M1054.7,744.8 L1042.7,784.7 M1165.9,798.5 L1152.1,830.9 M1165.9,798.5 L1263.3,862.9 M1152.1,830.9 L1249,884.9 M1347.8,596.8 L1288.6,654.3 M1347.8,596.8 L1445.2,717.2 M1288.6,654.3 L1385.3,751.2 M1445.2,717.2 L1385.3,751.2 M1326.1,792.4 L1398.5,796.2 M1398.5,796.2 L1391,864.9 M1326.9,871.1 L1391,864.9 M1341.8,1026.7 L1406.8,1001.7 M1341.8,1026.7 L1366.8,1143.4 M1406.8,1001.7 L1431,1119.4 M1419.3,897.8 L1531.6,851.1 M1419.3,897.8 L1455.2,976.7 M1455.2,976.7 L1558.4,941 M1558.4,941 L1552.1,1133.4 M1469.2,1133.4 L1552.1,1133.4 M1469.2,1133.4 L1461,1253.3 M1552.1,1133.4 L1536.6,1268.8 M1181.6,912.9 L1196.2,943.5 M1196.2,943.5 L1310.4,906.1 M1196.2,943.5 L1228.7,965.3 M1228.7,965.3 L1310.4,906.1 M1228.7,965.3 L1244.4,996.7 M1244.4,996.7 L1310.4,906.1 M1244.4,996.7 L1266.9,1027.7 M1266.9,1027.7 L1310.4,906.1 M810.5,816.2 L902.4,806.2 M902.4,806.2 L896.9,856.2 M798.7,850.4 L896.9,856.2 M902.4,806.2 L1051,849.9 M1051,849.9 L989.3,895.4 M1066.7,899.4 L1145.9,841.9 M1066.7,899.4 L1082.2,962.8 M1082.2,962.8 L1159.6,924.3 M837.4,912.9 L825,1037.7 M825,1037.7 L882.9,1041 M920.4,961.1 L1009.8,1013.5 M909.9,994.8 L1004.8,1056 M1009.8,1013.5 L1004.8,1056 M1096.7,1022.2 L1143.4,985.3 M1143.4,985.3 L1187.6,1031 M1096.7,1022.2 L1128.4,1080.9 M1128.4,1080.9 L1187.6,1031 M967.3,1085.2 L1046.7,1097.7 M967.3,1085.2 L968.6,1142.6 M1046.7,1097.7 L1049.2,1162.6 M968.6,1142.6 L1049.2,1162.6 M1112.2,1101.9 L1110.2,1166.4 M823,1162.6 L816.2,1230.8 M902.9,1176.9 L896.1,1241.8 M902.9,1176.9 L989.8,1191.3 M896.1,1241.8 L961.1,1251.3 M1017.3,1203.8 L1096.7,1197.6 M1017.3,1203.8 L1027.8,1275 M1096.7,1197.6 L1104.2,1270.8 M1179.1,1188.8 L1182.6,1267.5 M1104.2,1270.8 L1182.6,1267.5 M1175.8,1103.9 L1288.6,1052.7 M1175.8,1103.9 L1287.4,1082.7 M1175.8,1103.9 L1290.4,1108.4 M1175.8,1103.9 L1300.4,1140.9 M1288.6,1052.7 L1287.4,1082.7 M1287.4,1082.7 L1290.4,1108.4 M1290.4,1108.4 L1300.4,1140.9 M1300.4,1140.9 L1281.1,1170.9 M1243.7,1184.3 L1239.4,1248.8 M1329.9,1193.8 L1317.9,1253.8 M1329.9,1193.8 L1411.8,1194.3 M1411.8,1194.3 L1401.8,1258.3 M1317.9,1253.8 L1401.8,1258.3" fill="none" stroke="#000" stroke-width="8.2" stroke-opacity=".95"/><g fill="#ff2a2a" font-size="33" font-weight="bold" text-anchor="middle" font-family="Liberation Sans,sans-serif"><text x="1091" y="235">6.</text><text x="1211" y="176">11</text><text x="1481" y="221">22</text><text x="1319" y="320">21</text><text x="1113" y="334">15</text><text x="1201" y="476">16</text><text x="1141" y="586">18</text><text x="900" y="586">19</text><text x="873" y="732">20</text><text x="1390" y="535">23</text><text x="1525" y="496">27</text><text x="1359" y="690">25</text><text x="1363" y="931">24</text><text x="1513" y="1037">26</text><text x="1257" y="957">29</text><text x="977" y="871">28</text><text x="1114" y="920">30</text><text x="867" y="969">32</text><text x="1136" y="1050">31</text><text x="1005" y="1136">33</text><text x="862" y="1213">34</text><text x="1137" y="1242">36</text><text x="1254" y="1120">17</text><text x="1363" y="1239">35</text></g><g fill="#111" font-size="32" font-weight="bold" font-family="Liberation Sans,sans-serif"><text x="808" y="197">Other color</text><text x="811" y="252">Right horn</text></g><rect x="1184" y="1340" width="6" height="8" fill="#555"/></svg></div>
<div class="tl" style="top:666px">11</div>
<div class="thumb" style="top:723px"><svg width="161" height="226" viewBox="57 57 905 1271"><path d="M135,185 L185,130 L335,130 L355,160 L480,170 L475,200 L340,195 L320,225 L165,235Z M165,160 L340,150 M160,210 L330,200 M355,160 L340,195 M205,183 L235,150 L325,150 L337,168 L412,174 L409,192 L328,189 L316,207 L223,213Z M135,245 L320,225 L345,210 L430,215 L435,260 L410,290 L340,290 L215,320Z M320,225 L340,290 M345,240 L430,235 M212,250 L324,238 L338,229 L390,232 L392,259 L378,277 L336,277 L260,295Z M130,360 L150,335 L225,325 L425,275 L385,410 L265,395 L250,415 L150,410Z M225,325 L265,395 M140,385 L255,375 M177,362 L189,347 L234,341 L354,311 L330,392 L258,383 L249,395 L189,392Z M130,435 L260,425 L285,400 L355,410 L385,470 L350,505 L290,500 L255,470 L150,475Z M260,425 L255,470 M270,440 L375,455 M187,443 L265,437 L280,422 L322,428 L340,464 L319,485 L283,482 L262,464 L199,467Z M135,505 L175,485 L245,495 L260,515 L430,520 L420,580 L435,605 L410,630 L255,625 L245,590 L150,570Z M260,515 L255,625 M255,575 L420,580 M140,540 L255,545 M196,526 L220,514 L262,520 L271,532 L373,535 L367,571 L376,586 L361,601 L268,598 L262,577 L205,565Z M135,630 L160,610 L225,610 L235,745 L260,790 L235,850 L185,865 L150,830 L140,760Z M160,610 L165,760 M140,760 L235,745 M165,760 L185,865 M158,675 L173,663 L212,663 L218,744 L233,771 L218,807 L188,816 L167,795 L161,753Z M245,670 L275,645 L375,645 L395,665 L500,675 L490,730 L385,725 L370,745 L280,740 L250,715Z M395,665 L385,725 M260,690 L390,690 M255,715 L380,715 M290,680 L308,665 L368,665 L380,677 L443,683 L437,716 L374,713 L365,725 L311,722 L293,707Z M265,790 L400,745 L430,765 L550,770 L540,830 L520,855 L440,850 L425,825 L290,855 L275,830Z M430,765 L425,825 M275,805 L425,770 M440,820 L540,825 M324,799 L405,772 L423,784 L495,787 L489,823 L477,838 L429,835 L420,820 L339,838 L330,823Z M150,885 L305,880 L330,850 L375,860 L410,890 L405,935 L375,965 L325,960 L300,965 L185,960Z M305,880 L300,965 M165,930 L300,940 M330,850 L325,960 M216,897 L309,894 L324,876 L351,882 L372,900 L369,927 L351,945 L321,942 L306,945 L237,942Z M150,1010 L185,990 L285,995 L315,1020 L380,1020 L415,1045 L385,1070 L315,1065 L295,1085 L185,1080Z M315,1020 L315,1065 M165,1040 L300,1040 M160,1060 L300,1065 M206,1021 L227,1009 L287,1012 L305,1027 L344,1027 L365,1042 L347,1057 L305,1054 L293,1066 L227,1063Z M160,1135 L330,1115 L350,1095 L400,1095 L440,1145 L410,1195 L355,1200 L330,1175 L170,1190Z M330,1115 L330,1175 M350,1095 L355,1200 M330,1120 L435,1140 M227,1141 L329,1129 L341,1117 L371,1117 L395,1147 L377,1177 L344,1180 L329,1165 L233,1174Z M555,125 L580,115 L715,185 L585,265 L540,225Z M715,185 L555,125 M715,185 L545,165 M715,185 L540,225 M715,185 L560,250 M715,185 L585,265 M715,185 L570,140 M735,280 L745,150 L765,135 L800,140 L850,180 L830,230Z M735,280 L765,135 M735,280 L800,140 M735,280 L850,180 M735,280 L825,160 M435,320 L470,295 L610,280 L625,295 L775,305 L795,285 L860,290 L890,325 L870,370 L800,385 L760,365 L620,355 L580,385 L470,375Z M625,295 L620,355 M775,305 L760,365 M455,345 L620,320 M775,330 L885,335 M534,324 L555,309 L639,300 L648,309 L738,315 L750,303 L789,306 L807,327 L795,354 L753,363 L729,351 L645,345 L621,363 L555,357Z M445,470 L470,405 L565,395 L585,415 L740,375 L755,395 L860,400 L870,470 L725,465 L690,490 L585,490 L565,465Z M585,415 L585,490 M740,375 L725,465 M585,440 L730,425 M529,456 L544,418 L601,412 L613,424 L706,400 L715,412 L778,414 L784,456 L697,454 L676,468 L613,468 L601,454Z M445,640 L460,520 L480,495 L560,500 L600,540 L735,530 L860,500 L895,540 L775,580 L760,605 L655,635 L600,600Z M600,540 L655,635 M735,530 L775,580 M560,500 L600,600 M460,560 L585,545 M528,607 L537,535 L549,520 L597,523 L621,547 L702,541 L777,523 L798,547 L726,571 L717,586 L654,604 L621,583Z M590,690 L610,670 L690,665 L715,640 L850,630 L870,650 L860,705 L875,720 L850,745 L700,760 L670,740 L620,740Z M690,665 L700,760 M715,690 L860,670 M700,725 L860,705 M651,692 L663,680 L711,678 L726,662 L807,656 L819,668 L813,702 L822,710 L807,726 L717,734 L699,722 L669,722Z M560,790 L720,785 L735,830 L765,845 L750,885 L720,900 L685,910 L560,880Z M565,835 L735,830 M720,785 L685,910 M611,815 L707,812 L716,839 L734,848 L725,872 L707,881 L686,887 L611,869Z M780,785 L860,770 L880,795 L870,885 L850,915 L790,920Z M860,770 L850,915 M425,910 L445,880 L615,945 L465,1045 L435,1015 L445,990 L425,965 L440,940Z M440,930 L452,912 L554,952 L464,1012 L446,994 L452,978 L440,964 L449,948Z M615,945 L440,940 M615,945 L445,990 M615,945 L465,1045 M615,945 L430,910 M630,975 L650,955 L780,955 L815,995 L800,1030 L765,1045 L740,1030 L655,1035 L635,1010Z M780,955 L740,1030 M640,995 L760,990 M760,960 L800,1030 M666,986 L678,974 L756,974 L777,998 L768,1019 L747,1028 L732,1019 L681,1022 L669,1007Z M475,1100 L515,1065 L600,1060 L625,1085 L630,1155 L535,1180 L490,1135Z M490,1095 L625,1095 M490,1135 L625,1125 M506,1105 L530,1084 L581,1081 L596,1096 L599,1138 L542,1153 L515,1126Z M660,1105 L770,1065 L825,1095 L815,1150 L785,1190 L755,1205Z M660,1105 L825,1095 M660,1105 L815,1150 M660,1105 L785,1190 M660,1105 L820,1120 M660,1105 L800,1170" fill="none" stroke="#000" stroke-width="8.4" stroke-linejoin="round"/><g fill="#e02020" font-size="27" font-weight="bold" fill-opacity=".85" text-anchor="middle" font-family="Liberation Sans,sans-serif"><text x="205" y="185">37</text><text x="235" y="285">39</text><text x="335" y="370">41</text><text x="300" y="465">40</text><text x="320" y="560">42</text><text x="190" y="670">43</text><text x="345" y="695">44</text><text x="485" y="805">45</text><text x="275" y="920">51</text><text x="275" y="1050">52</text><text x="370" y="1155">53</text><text x="610" y="200">46</text><text x="785" y="200">47</text><text x="570" y="335">48</text><text x="660" y="445">68</text><text x="680" y="580">69</text><text x="745" y="695">50</text><text x="655" y="860">57</text><text x="815" y="845">58</text><text x="485" y="970">54</text><text x="715" y="1010">55</text><text x="530" y="1115">56</text><text x="770" y="1115">59</text></g><rect x="500" y="1275" width="8" height="5" fill="#555"/></svg></div>
<div class="tl" style="top:965px">12</div>
<div class="thumb" style="top:1022px"><svg width="161" height="226" viewBox="57 57 905 1271"><path d="M140,300 L165,250 L245,220 L275,235 L290,205 L375,200 L400,225 L395,280 L280,285 L160,305Z M275,235 L280,285 M155,280 L270,255 M193,280 L208,250 L256,232 L274,241 L283,223 L334,220 L349,235 L346,268 L277,271 L205,283Z M395,205 L460,125 L500,130 L530,180 L525,235 L400,230Z M395,205 L500,130 M395,205 L530,180 M395,205 L525,200 M395,205 L525,235 M395,205 L520,155 M545,160 L600,140 L700,130 L730,175 L650,275 L560,200Z M650,275 L545,160 M650,275 L600,140 M650,275 L650,135 M650,275 L700,130 M400,230 L510,250 L640,280 L640,320 L520,310 L505,280 L400,280Z M510,250 L520,310 M447,249 L513,261 L591,279 L591,303 L519,297 L510,279 L447,279Z M755,160 L785,125 L885,150 L880,190 L860,215 L880,245 L875,350 L845,370 L815,355 L820,300 L790,270 L800,230 L760,190Z M785,125 L760,190 M800,230 L860,215 M820,300 L875,295 M760,190 L880,190 M784,193 L802,172 L862,187 L859,211 L847,226 L859,244 L856,307 L838,319 L820,310 L823,277 L805,259 L811,235 L787,211Z M150,345 L175,325 L250,320 L275,345 L290,320 L385,318 L410,345 L500,345 L540,335 L625,375 L615,405 L540,380 L505,400 L420,395 L400,370 L285,390 L265,410 L215,420 L175,395Z M275,345 L285,390 M410,345 L420,395 M160,360 L270,365 M290,345 L405,345 M540,335 L540,380 M238,353 L253,341 L298,338 L313,353 L322,338 L379,337 L394,353 L448,353 L472,347 L523,371 L517,389 L472,374 L451,386 L400,383 L388,368 L319,380 L307,392 L277,398 L253,383Z M135,490 L160,465 L300,440 L330,455 L350,425 L440,420 L465,440 L580,435 L600,450 L580,465 L465,470 L440,495 L375,505 L345,480 L215,545 L190,545Z M330,455 L345,480 M465,440 L465,470 M150,480 L320,460 M340,450 L460,450 M230,482 L245,467 L329,452 L347,461 L359,443 L413,440 L428,452 L497,449 L509,458 L497,467 L428,470 L413,485 L374,491 L356,476 L278,515 L263,515Z M165,600 L185,570 L240,560 L270,590 L385,565 L395,535 L515,510 L540,525 L620,485 L650,510 L600,600 L555,605 L530,580 L500,610 L400,615 L380,590 L265,615 L245,640 L185,635Z M270,590 L265,615 M540,525 L530,580 M385,565 L400,615 M175,610 L265,600 M395,560 L530,545 M260,590 L272,572 L305,566 L323,584 L392,569 L398,551 L470,536 L485,545 L533,521 L551,536 L521,590 L494,593 L479,578 L461,596 L401,599 L389,584 L320,599 L308,614 L272,611Z M140,710 L165,670 L225,665 L250,650 L395,625 L420,650 L545,625 L575,650 L565,690 L440,715 L465,760 L435,790 L370,810 L340,775 L255,760 L190,775 L160,750Z M225,665 L255,760 M420,650 L440,715 M250,650 L420,650 M150,730 L240,715 M255,760 L440,715 M224,710 L239,686 L275,683 L290,674 L377,659 L392,674 L467,659 L485,674 L479,698 L404,713 L419,740 L401,758 L362,770 L344,749 L293,740 L254,749 L236,734Z M680,310 L715,285 L760,300 L785,335 L765,400 L720,545 L735,575 L715,610 L685,630 L650,610 L645,545 L685,385Z M685,385 L765,400 M645,545 L720,545 M715,285 L700,390 M693,370 L714,355 L741,364 L756,385 L744,424 L717,511 L726,529 L714,550 L696,562 L675,550 L672,511 L696,415Z M770,440 L800,395 L855,395 L870,420 L860,570 L850,700 L815,710 L780,685 L795,570Z M800,395 L795,570 M795,570 L860,580 M850,410 L835,570 M791,481 L809,454 L842,454 L851,469 L845,559 L839,637 L818,643 L797,628 L806,559Z M600,680 L625,660 L725,650 L695,770 L660,745 L640,715Z M725,650 L600,680 M725,650 L615,700 M725,650 L640,715 M725,650 L660,745 M475,740 L500,725 L590,740 L615,775 L710,825 L690,840 L600,815 L585,825 L520,820 L495,790Z M590,740 L600,815 M490,765 L600,780 M516,760 L531,751 L585,760 L600,781 L657,811 L645,820 L591,805 L582,811 L543,808 L528,790Z M140,810 L215,805 L230,780 L315,765 L345,790 L440,755 L470,790 L450,820 L380,845 L355,820 L225,880 L150,905Z M215,805 L225,880 M345,790 L355,820 M230,820 L350,800 M208,812 L253,808 L262,794 L313,784 L331,800 L388,778 L406,800 L394,818 L352,832 L337,818 L259,854 L214,868Z M145,945 L235,900 L370,875 L550,845 L700,870 L640,930 L545,920 L375,920 L360,950 L280,960 L255,940 L160,1000Z M370,875 L375,920 M550,845 L545,920 M235,900 L255,940 M241,936 L295,908 L376,894 L484,876 L574,890 L538,926 L481,920 L379,920 L370,938 L322,944 L307,932 L250,968Z M740,765 L775,710 L830,735 L810,790 L790,800 L785,940 L720,915 L735,800Z M735,800 L790,800 M775,710 L760,800 M753,782 L774,749 L807,764 L795,797 L783,803 L780,887 L741,872 L750,803Z M810,830 L830,810 L880,815 L890,830 L870,915 L880,940 L870,1000 L830,1010 L810,985 L805,920Z M805,920 L870,915 M830,810 L825,920 M810,850 L885,850 M825,860 L837,848 L867,851 L873,860 L861,911 L867,926 L861,962 L837,968 L825,953 L822,914Z M130,1060 L240,1005 L260,1025 L420,945 L515,940 L530,960 L520,1040 L495,1070 L430,1065 L415,1045 L290,1090 L275,1080 L170,1125Z M420,945 L415,1045 M240,1005 L275,1080 M515,940 L495,1070 M420,1000 L525,1000 M222,1050 L288,1017 L300,1029 L396,981 L453,978 L462,990 L456,1038 L441,1056 L402,1053 L393,1041 L318,1068 L309,1062 L246,1089Z M570,970 L590,960 L690,965 L720,945 L790,975 L820,1025 L825,1075 L795,1090 L770,1075 L755,1035 L720,1020 L680,990 L600,1000Z M690,965 L680,990 M720,945 L755,1035 M590,980 L685,980 M629,986 L641,980 L701,983 L719,971 L761,989 L779,1019 L782,1049 L764,1058 L749,1049 L740,1025 L719,1016 L695,998 L647,1004Z M515,1060 L545,1030 L595,1020 L690,1030 L715,1060 L705,1090 L680,1105 L600,1110 L545,1105 L520,1085Z M545,1030 L545,1105 M690,1030 L680,1105 M545,1060 L690,1060 M553,1064 L571,1046 L601,1040 L658,1046 L673,1064 L667,1082 L652,1091 L604,1094 L571,1091 L556,1079Z M170,1170 L200,1145 L260,1150 L290,1130 L330,1145 L350,1175 L325,1205 L280,1210 L255,1205 L215,1225 L185,1200Z M260,1150 L255,1205 M200,1145 L215,1225 M206,1173 L224,1158 L260,1161 L278,1149 L302,1158 L314,1176 L299,1194 L272,1197 L257,1194 L233,1206 L215,1191Z M345,1110 L365,1095 L445,1120 L470,1095 L505,1110 L520,1160 L495,1200 L455,1195 L440,1170 L360,1145Z M445,1120 L440,1170 M470,1095 L455,1195 M383,1122 L395,1113 L443,1128 L458,1113 L479,1122 L488,1152 L473,1176 L449,1173 L440,1158 L392,1143Z M540,1135 L580,1110 L640,1150 L680,1235 L540,1235Z M680,1235 L540,1135 M680,1235 L580,1110 M680,1235 L610,1130 M680,1235 L540,1180 M680,1235 L560,1120 M690,1150 L720,1120 L790,1125 L815,1100 L860,1115 L885,1160 L860,1205 L810,1215 L790,1195 L715,1195 L695,1175Z M790,1125 L790,1195 M720,1120 L715,1195 M815,1100 L810,1215 M728,1154 L746,1136 L788,1139 L803,1124 L830,1133 L845,1160 L830,1187 L800,1193 L788,1181 L743,1181 L731,1169Z" fill="none" stroke="#000" stroke-width="8.4" stroke-linejoin="round"/><g fill="#e02020" font-size="27" font-weight="bold" fill-opacity=".85" text-anchor="middle" font-family="Liberation Sans,sans-serif"><text x="360" y="260">60</text><text x="475" y="185">64</text><text x="635" y="200">66</text><text x="820" y="225">67</text><text x="235" y="385">61</text><text x="260" y="500">63</text><text x="485" y="570">65</text><text x="735" y="340">69</text><text x="810" y="470">68</text><text x="335" y="720">72</text><text x="680" y="710">74</text><text x="565" y="795">73</text><text x="275" y="835">70</text><text x="495" y="895">66</text><text x="755" y="845">77</text><text x="835" y="885">79</text><text x="345" y="1030">71</text><text x="785" y="1045">76</text><text x="645" y="1080">80</text><text x="285" y="1195">78</text><text x="475" y="1160">79</text><text x="590" y="1195">75</text><text x="815" y="1170">81</text></g><text x="145" y="175" font-size="27" font-weight="bold" fill="#333" font-family="Liberation Sans,sans-serif">Left horn</text><rect x="500" y="1275" width="8" height="5" fill="#555"/></svg></div>
<div class="tl" style="top:1264px">13</div>
<svg width="60" height="200" style="position:absolute;left:0;top:0">
<rect x="18.3" y="35.1" width="19.9" height="20" rx="2.2" fill="none" stroke="#8ab4f8" stroke-width="2.6"/>
<path d="M22,50.6 L25.2,46.9 L27.5,49.2 L31.1,45.4 L35,50.6Z" fill="#8ab4f8"/>
<rect x="18.3" y="123.7" width="19.9" height="20.5" rx="1.6" fill="none" stroke="#fff" stroke-width="2.6"/>
<g fill="#fff"><rect x="22" y="127.8" width="2.6" height="2.4"/><rect x="27.2" y="127.8" width="7.8" height="2.4"/>
<rect x="22" y="132.8" width="2.6" height="2.4"/><rect x="27.2" y="132.8" width="7.8" height="2.4"/>
<rect x="22" y="137.8" width="2.6" height="2.4"/><rect x="27.2" y="137.8" width="7.8" height="2.4"/></g>
</svg>
</div>
<div id="sbar"><div id="sthumb"></div>
<div class="arr" style="top:9px;border-bottom:7px solid #505050;"></div>
<div class="arr" style="top:1291px;border-top:7px solid #505050;"></div>
</div>
<div id="tbar">
<svg width="2002" height="80" style="position:absolute;left:0;top:0">
<g fill="#fff"><rect x="16" y="29.4" width="24.5" height="2.6"/><rect x="16" y="37.7" width="24.5" height="2.6"/><rect x="16" y="45.5" width="24.5" height="2.6"/>
<rect x="893.5" y="37.6" width="18" height="2.4"/>
<rect x="1025.4" y="37.6" width="18" height="2.4"/><rect x="1033.2" y="29.8" width="2.4" height="18"/>
</g>
<rect x="1100.35" y="28.15" width="25.6" height="20.7" rx="2.2" fill="none" stroke="#fff" stroke-width="2.7"/>
<path d="M1113,32 L1116.4,36.3 L1109.6,36.3Z M1113,46.3 L1116.4,42 L1109.6,42Z" fill="#fff"/>
<path transform="translate(1151.8,24.5) scale(1.18)" fill="#fff" d="M7.34 6.41L.86 12.9l6.49 6.48 6.49-6.48-6.5-6.49zM3.69 12.9l3.66-3.66L11 12.9l-3.66 3.66-3.65-3.66zm15.67-6.26C17.61 4.88 15.3 4 13 4V.76L8.76 5 13 9.24V6c1.79 0 3.58.68 4.95 2.05 2.73 2.73 2.73 7.17 0 9.9C16.58 19.32 14.79 20 13 20c-.97 0-1.94-.21-2.84-.61l-1.49 1.49C10.02 21.62 11.51 22 13 22c2.3 0 4.61-.88 6.36-2.64 3.52-3.51 3.52-9.21 0-12.72z"/>
</svg>
<div id="title">DEER_TROPHY_hobbymo.pdf</div>
<div class="box" style="left:759.5px;width:35.5px;"></div>
<div class="tt" style="left:765.5px;">11</div>
<div class="tt" style="left:800.5px;letter-spacing:.9px;word-spacing:1.5px;">/ 14</div>
<div class="dv" style="left:868px;"></div>
<div class="box" style="left:935px;width:66.5px;"></div>
<div class="tt" style="left:935px;width:66.5px;text-align:center;font-size:17.5px;">80%</div>
<div class="dv" style="left:1067px;"></div>
</div>
<div id="edge"></div>
</body></html>
